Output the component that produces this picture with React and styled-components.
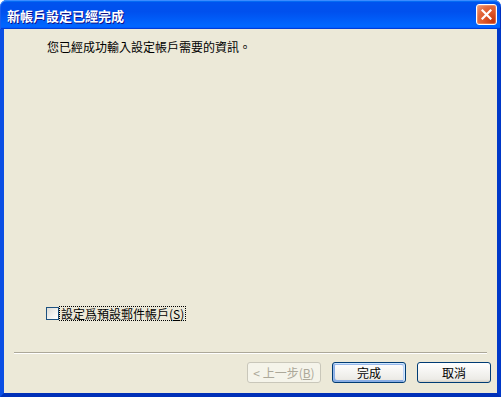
import React from "react";
import styled, { createGlobalStyle } from "styled-components";

const Global = createGlobalStyle`
  html, body { margin: 0; padding: 0; background: #ffffff; }
  body { width: 501px; height: 397px; overflow: hidden; }
  * { box-sizing: border-box; }
`;

const FONT = `"Noto Sans CJK TC", "Noto Sans CJK SC", "Liberation Sans", sans-serif`;

const Window = styled.div`
  width: 501px;
  height: 397px;
  display: flex;
  flex-direction: column;
  font-family: ${FONT};
  font-size: 12px;
  color: #000;
`;

const TitleBar = styled.div`
  height: 29px;
  flex: none;
  display: flex;
  align-items: center;
  justify-content: space-between;
  padding: 0 4px 0 7px;
  border-radius: 7px 7px 0 0;
  background: linear-gradient(
    180deg,
    #0997ff,
    #0053ee 8%,
    #0050ee 40%,
    #0066ff 88%,
    #0066ff 93%,
    #005bff 95%,
    #003dd7 96%,
    #003dd7
  );
  box-shadow: inset 0 1px #3a8cff, inset 1px 0 #1a5ef0, inset -1px 0 #0030c0;
`;

const Title = styled.span`
  color: #fff;
  font-weight: bold;
  font-size: 13px;
  line-height: 15px;
  text-shadow: 1px 1px #0f1089;
  margin-top: 1px;
`;

const CloseButton = styled.div`
  width: 21px;
  height: 21px;
  border: 1px solid #fff;
  border-radius: 3px;
  display: flex;
  align-items: center;
  justify-content: center;
  background: radial-gradient(
    circle at 85% 85%,
    #c5370f 0%,
    #df5a2d 45%,
    #e2693d 65%,
    #f0a080 100%
  );
  box-shadow: inset 0 0 0 1px rgba(255, 190, 160, 0.35);
`;

const Body = styled.div`
  flex: 1;
  display: flex;
  flex-direction: column;
  background: #ece9d8;
  border-style: solid;
  border-width: 0 4px 4px 4px;
  border-color: #0842d8 #0038c8 #0030b8 #0a4ee4;
`;

const Message = styled.div`
  margin: 11px 0 0 43px;
  line-height: 14px;
`;

const Spacer = styled.div`
  flex: 1;
`;

const CheckRow = styled.label`
  display: flex;
  align-items: center;
  margin-left: 42px;
  height: 14px;
  gap: 1px;
`;

const Box = styled.span`
  width: 13px;
  height: 13px;
  flex: none;
  border: 1px solid #1c5180;
  background: linear-gradient(135deg, #dcdcd7 0%, #fbfbf9 80%, #ffffff 100%);
`;

const Label = styled.span`
  outline: 1px dotted #000;
  outline-offset: 0;
  line-height: 13px;
  padding: 0 1px;
`;

const U = styled.span`
  text-decoration: underline;
`;

const Separator = styled.div`
  margin: 32px 10px 0 10px;
  height: 2px;
  border-top: 1px solid #aca899;
  border-bottom: 1px solid #ffffff;
`;

const ButtonRow = styled.div`
  display: flex;
  justify-content: flex-end;
  gap: 11px;
  margin-top: 8px;
  padding: 0 6px 10px 0;
`;

const Button = styled.div`
  width: 74px;
  height: 21px;
  display: flex;
  align-items: center;
  justify-content: center;
  border-radius: 3px;
  border: 1px solid ${(p) => (p.$disabled ? "#c9c7ba" : "#003c74")};
  color: ${(p) => (p.$disabled ? "#aca899" : "#000")};
  background: ${(p) =>
    p.$disabled
      ? "#f5f4ea"
      : "linear-gradient(180deg, #ffffff, #ecebe6 86%, #d6d0c5)"};
  box-shadow: ${(p) =>
    p.$default
      ? "inset -1px 1px #cee7ff, inset 1px 2px #98b8ea, inset -2px 2px #bcd4f6, inset 1px -1px #89ade4, inset 2px -2px #89ade4"
      : "none"};
  line-height: 13px;
`;

export default function App() {
  return (
    <>
      <Global />
      <Window>
        <TitleBar>
          <Title>新帳戶設定已經完成</Title>
          <CloseButton>
            <svg width="11" height="11" viewBox="0 0 11 11">
              <path
                d="M1.5 1.5 L9.5 9.5 M9.5 1.5 L1.5 9.5"
                stroke="#fff"
                strokeWidth="2.2"
                strokeLinecap="square"
              />
            </svg>
          </CloseButton>
        </TitleBar>
        <Body>
          <Message>您已經成功輸入設定帳戶需要的資訊。</Message>
          <Spacer />
          <CheckRow>
            <Box />
            <Label>
              設定爲預設郵件帳戶(<U>S</U>)
            </Label>
          </CheckRow>
          <Separator />
          <ButtonRow>
            <Button $disabled>&lt; 上一步(<U>B</U>)</Button>
            <Button $default>完成</Button>
            <Button>取消</Button>
          </ButtonRow>
        </Body>
      </Window>
    </>
  );
}
